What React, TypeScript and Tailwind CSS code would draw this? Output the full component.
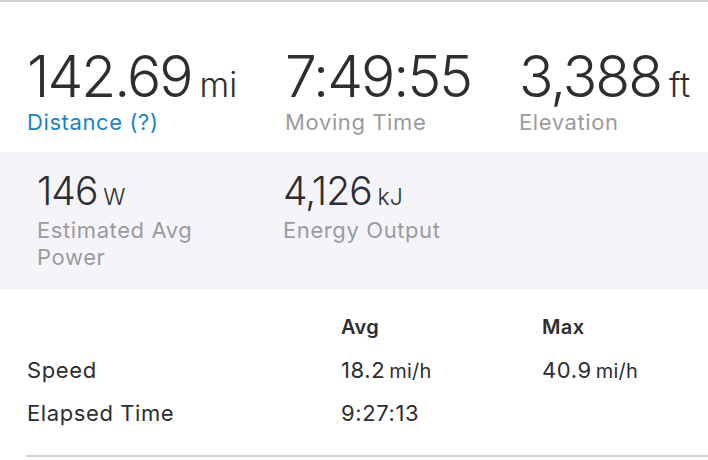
import React from "react";

function BigStat({ value, unit, label, blue }: { value: string; unit?: string; label: string; blue?: boolean }) {
  return (
    <div>
      <div className="text-[57px] leading-[56px] font-light text-[#2d2d32] tracking-[-2px] whitespace-nowrap">
        {value}
        {unit && <span className="ml-[8px] text-[34px] leading-[20px] tracking-normal">{unit}</span>}
      </div>
      <div className={`mt-[3px] text-[22px] leading-[28px] tracking-[0.6px] ${blue ? "text-[#1a86bf]" : "text-[#9b9b9f]"}`}>{label}</div>
    </div>
  );
}

function MidStat({ value, unit, label }: { value: string; unit: string; label: React.ReactNode }) {
  return (
    <div>
      <div className="text-[39px] leading-[39px] font-light text-[#2d2d32] tracking-[-1px] whitespace-nowrap">
        {value}
        <span className="ml-[6px] text-[23px] leading-[16px] tracking-normal">{unit}</span>
      </div>
      <div className="mt-[7px] text-[22px] leading-[27px] tracking-[0.6px] text-[#9b9b9f]">{label}</div>
    </div>
  );
}

function Val({ v, u }: { v: string; u?: string }) {
  return (
    <span className="whitespace-nowrap">
      {v}
      {u && <span className="ml-[4px] text-[20px] leading-[16px] tracking-[0.2px]">{u}</span>}
    </span>
  );
}

export default function App() {
  return (
    <div className="w-[708px] h-[460px] bg-white overflow-hidden" style={{ fontFamily: "Inter, 'Liberation Sans', sans-serif" }}>
      <div className="h-[2px] bg-[#cfcfd3]" />
      <div className="flex gap-[48px] pl-[27px] pt-[47px]">
        <BigStat value="142.69" unit="mi" label="Distance (?)" blue />
        <BigStat value="7:49:55" label="Moving Time" />
        <BigStat value="3,388" unit="ft" label="Elevation" />
      </div>
      <div className="mt-[16px] bg-[#f5f5f9] h-[138px] pt-[19px] pl-[37px] grid grid-cols-[246px_1fr]">
        <div className="w-[190px]">
          <MidStat value="146" unit="W" label="Estimated Avg Power" />
        </div>
        <MidStat value="4,126" unit="kJ" label="Energy Output" />
      </div>
      <div className="pl-[27px] pt-[25px] grid grid-cols-[314px_201px_1fr] text-[22px] leading-[24px] tracking-[0.6px] text-[#2d2d32]">
        <div />
        <div className="font-semibold text-[20px] tracking-[0.4px]">Avg</div>
        <div className="font-semibold text-[20px] tracking-[0.4px]">Max</div>
        <div className="mt-[19px]">Speed</div>
        <div className="mt-[19px]"><Val v="18.2" u="mi/h" /></div>
        <div className="mt-[19px]"><Val v="40.9" u="mi/h" /></div>
        <div className="mt-[19px]">Elapsed Time</div>
        <div className="mt-[19px]"><Val v="9:27:13" /></div>
        <div className="mt-[19px]" />
      </div>
      <div className="ml-[26px] mt-[30px] h-[2px] bg-[#cfcfd3]" />
    </div>
  );
}
